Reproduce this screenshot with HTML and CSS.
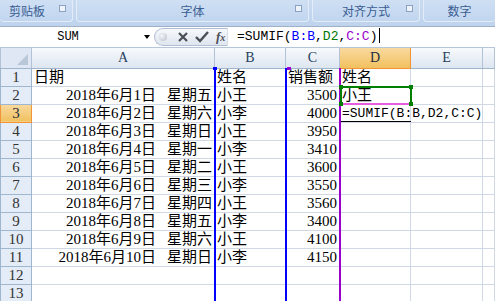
FILE: index.html
```html
<!DOCTYPE html>
<html lang="zh-CN">
<head>
    <meta charset="UTF-8">
    <title>SUMIF</title>
    <link rel="stylesheet" href="styles.css">
</head>
<body>
    <div class="ribbon">
        <div class="group g1">剪贴板<span class="launch"></span></div>
        <div class="group g2">字体<span class="launch"></span></div>
        <div class="group g3">对齐方式<span class="launch"></span></div>
        <div class="group g4">数字</div>
    </div>
    <div class="fbar">
        <div class="namebox">SUM<span class="arrow"></span></div>
        <div class="pill">
            <span class="dot"></span>
            <svg class="btn" width="14" height="14" viewBox="0 0 14 14"><path d="M3 3 L11 11 M11 3 L3 11" stroke="#4a4f57" stroke-width="2.2" fill="none"/></svg>
            <svg class="btn" width="16" height="14" viewBox="0 0 16 14"><path d="M2 7 L6 11 L14 2" stroke="#4a4f57" stroke-width="2.4" fill="none"/></svg>
            <span class="fx">f<small>x</small></span>
        </div>
        <div class="finput">=SUMIF(<span class="rb">B:B</span>,<span class="rg">D2</span>,<span class="rp">C:C</span>)<span class="caret"></span></div>
    </div>
    <div class="sheet">
        <table>
            <colgroup>
                <col class="c-rh"><col class="c-a"><col class="c-b"><col class="c-c"><col class="c-d"><col class="c-e"><col>
            </colgroup>
            <tr class="head">
                <th class="corner"><span class="tri"></span></th><th>A</th><th>B</th><th>C</th><th class="hl">D</th><th>E</th><th></th>
            </tr>
            <tr><th>1</th><td>日期</td><td>姓名</td><td>销售额</td><td>姓名</td><td></td><td></td></tr>
            <tr><th>2</th><td class="r">2018年6月1日<span class="wk">星期五</span></td><td>小王</td><td class="r">3500</td><td>小王</td><td></td><td></td></tr>
            <tr><th class="hl">3</th><td class="r">2018年6月2日<span class="wk">星期六</span></td><td>小李</td><td class="r">4000</td><td class="edit">=SUMIF(B:B,D2,C:C)</td><td></td><td></td></tr>
            <tr><th>4</th><td class="r">2018年6月3日<span class="wk">星期日</span></td><td>小王</td><td class="r">3950</td><td></td><td></td><td></td></tr>
            <tr><th>5</th><td class="r">2018年6月4日<span class="wk">星期一</span></td><td>小李</td><td class="r">3410</td><td></td><td></td><td></td></tr>
            <tr><th>6</th><td class="r">2018年6月5日<span class="wk">星期二</span></td><td>小王</td><td class="r">3600</td><td></td><td></td><td></td></tr>
            <tr><th>7</th><td class="r">2018年6月6日<span class="wk">星期三</span></td><td>小李</td><td class="r">3550</td><td></td><td></td><td></td></tr>
            <tr><th>8</th><td class="r">2018年6月7日<span class="wk">星期四</span></td><td>小王</td><td class="r">3560</td><td></td><td></td><td></td></tr>
            <tr><th>9</th><td class="r">2018年6月8日<span class="wk">星期五</span></td><td>小李</td><td class="r">3400</td><td></td><td></td><td></td></tr>
            <tr><th>10</th><td class="r">2018年6月9日<span class="wk">星期六</span></td><td>小王</td><td class="r">4100</td><td></td><td></td><td></td></tr>
            <tr><th>11</th><td class="r">2018年6月10日<span class="wk">星期日</span></td><td>小李</td><td class="r">4150</td><td></td><td></td><td></td></tr>
            <tr><th>12</th><td></td><td></td><td></td><td></td><td></td><td></td></tr>
            <tr><th>13</th><td></td><td></td><td></td><td></td><td></td><td></td></tr>
        </table>
        <div class="ref ref-b"></div>
        <div class="ref ref-bc"></div>
        <div class="ref ref-c"></div>
        <span class="knob kb"></span>
        <span class="knob kc"></span>
        <div class="sel"><span class="h tl"></span><span class="h tr"></span><span class="h bl"></span><span class="h br"></span></div>
        <div class="under"></div>
    </div>
</body>
</html>
```

FILE: styles.css
```css
body {
    margin: 0;
    width: 495px;
    height: 301px;
    overflow: hidden;
    background: #fff;
    font-family: "Liberation Serif", "Noto Sans CJK SC", serif;
}

.ribbon {
    display: flex;
    gap: 3px;
    height: 23px;
    padding-bottom: 3px;
    background: linear-gradient(#c9dbf1, #bfd3ed);
}

.group {
    position: relative;
    height: 21px;
    line-height: 21px;
    text-align: center;
    font-family: "Noto Sans CJK SC", sans-serif;
    font-size: 12px;
    color: #3a5d92;
    background: linear-gradient(#cfe0f4, #c1d5ef);
    border: 1px solid #e3edf8;
    border-top: none;
    border-radius: 0 0 4px 4px;
}

.g1 { width: 72px; text-align: left; text-indent: 9px; border-left: none; }
.g2 { width: 231px; }
.g3 { width: 106px; }
.g4 { flex: 1; border-right: none; }

.launch {
    position: absolute;
    right: 6px;
    top: 5px;
    width: 5px;
    height: 5px;
    border: 1px solid #8aa2c4;
    background: #eef3fa;
}

.fbar {
    display: flex;
    height: 20px;
    border-top: 1px solid #9fb1c9;
    border-bottom: 1px solid #b6c6da;
    background: #fff;
}

.namebox {
    position: relative;
    width: 154px;
    line-height: 20px;
    text-align: center;
    font-family: "Liberation Mono", monospace;
    font-size: 12px;
    text-indent: -18px;
    color: #000;
}

.arrow {
    position: absolute;
    left: 144px;
    top: 8px;
    border-left: 3.5px solid transparent;
    border-right: 3.5px solid transparent;
    border-top: 4px solid #000;
}

.pill {
    display: flex;
    align-items: center;
    gap: 4px;
    width: 74px;
    height: 18px;
    margin-top: 1px;
    padding-left: 4px;
    box-sizing: border-box;
    border: 1px solid #b0bfd2;
    border-right-color: #d7dfea;
    border-radius: 9px 0 0 9px;
    background: linear-gradient(#f6f8fb, #dfe6ef);
}

.dot {
    width: 8px;
    height: 8px;
    border-radius: 50%;
    background: radial-gradient(circle at 35% 35%, #f4f6f9, #b7bec8);
    margin-right: 5px;
}

.fx {
    font-family: "Liberation Serif", serif;
    font-style: italic;
    font-weight: bold;
    font-size: 13px;
    color: #4a4f57;
    margin-left: 2px;
}

.fx small { font-size: 10px; }

.finput {
    padding-left: 9px;
    line-height: 20px;
    font-family: "Liberation Mono", monospace;
    font-size: 13px;
    color: #000;
}

.rb { color: #0000ff; }
.rg { color: #007a00; }
.rp { color: #9900cc; }

.caret {
    display: inline-block;
    width: 1px;
    height: 15px;
    margin-left: 2px;
    vertical-align: -3px;
    background: #000;
}

.sheet {
    position: relative;
    height: 253px;
    overflow: hidden;
}

table {
    border-collapse: collapse;
    table-layout: fixed;
    width: 495px;
}

.c-rh { width: 31px; }
.c-a { width: 183px; }
.c-b { width: 71px; }
.c-c { width: 54px; }
.c-d { width: 71px; }
.c-e { width: 72px; }

tr { height: 18px; }

td, th {
    padding: 0 2px;
    height: 17px;
    line-height: 17px;
    font-size: 15px;
    white-space: nowrap;
    overflow: visible;
    color: #000;
    border: 1px solid #d0d7e5;
    text-align: left;
}

th {
    font-weight: normal;
    text-align: center;
    color: #333;
    background: #e4ecf7;
    border-color: #9eb6ce;
}

.head { height: 20px; }

.head th {
    height: 19px;
    font-size: 14px;
    color: #27415f;
    background: linear-gradient(#f7f9fc, #dde5f0);
    border-top: none;
    border-color: #b3c3d7;
    border-bottom-color: #9eb6ce;
}

.head .corner {
    position: relative;
    background: #dee7f3;
}

.tri {
    position: absolute;
    right: 3px;
    bottom: 3px;
    border-left: 11px solid transparent;
    border-bottom: 11px solid #b9c7d9;
}

th.hl, .head th.hl {
    background: linear-gradient(#f9d99f, #f1c15f);
    border-color: #f29536;
    color: #1f2d3d;
}

.r { text-align: right; }

.wk { margin-left: 11px; }

.edit {
    font-family: "Liberation Mono", monospace;
    font-size: 13px;
}

.ref {
    position: absolute;
    top: 20px;
    bottom: 0;
    width: 2px;
}

.ref-b { left: 214px; background: #0000ff; }
.ref-bc { left: 285px; background: #0000ff; }
.ref-c { left: 339px; background: #9900cc; }

.knob {
    position: absolute;
    top: 19px;
    width: 4px;
    height: 3px;
}

.kb { left: 213px; background: #0000ff; }
.kc { left: 287px; background: #9900cc; }

.sel {
    position: absolute;
    left: 340px;
    top: 38px;
    width: 68px;
    height: 15px;
    border: 2px solid #008000;
    border-bottom: 2px solid #e65ee0;
}

.h {
    position: absolute;
    width: 4px;
    height: 4px;
    background: #008000;
}

.tl { left: -3px; top: -3px; }
.tr { right: -3px; top: -3px; }
.bl { left: -3px; bottom: -3px; }
.br { right: -3px; bottom: -3px; }

.under {
    position: absolute;
    left: 341px;
    top: 73px;
    width: 70px;
    height: 1px;
    background: #000;
}
```
